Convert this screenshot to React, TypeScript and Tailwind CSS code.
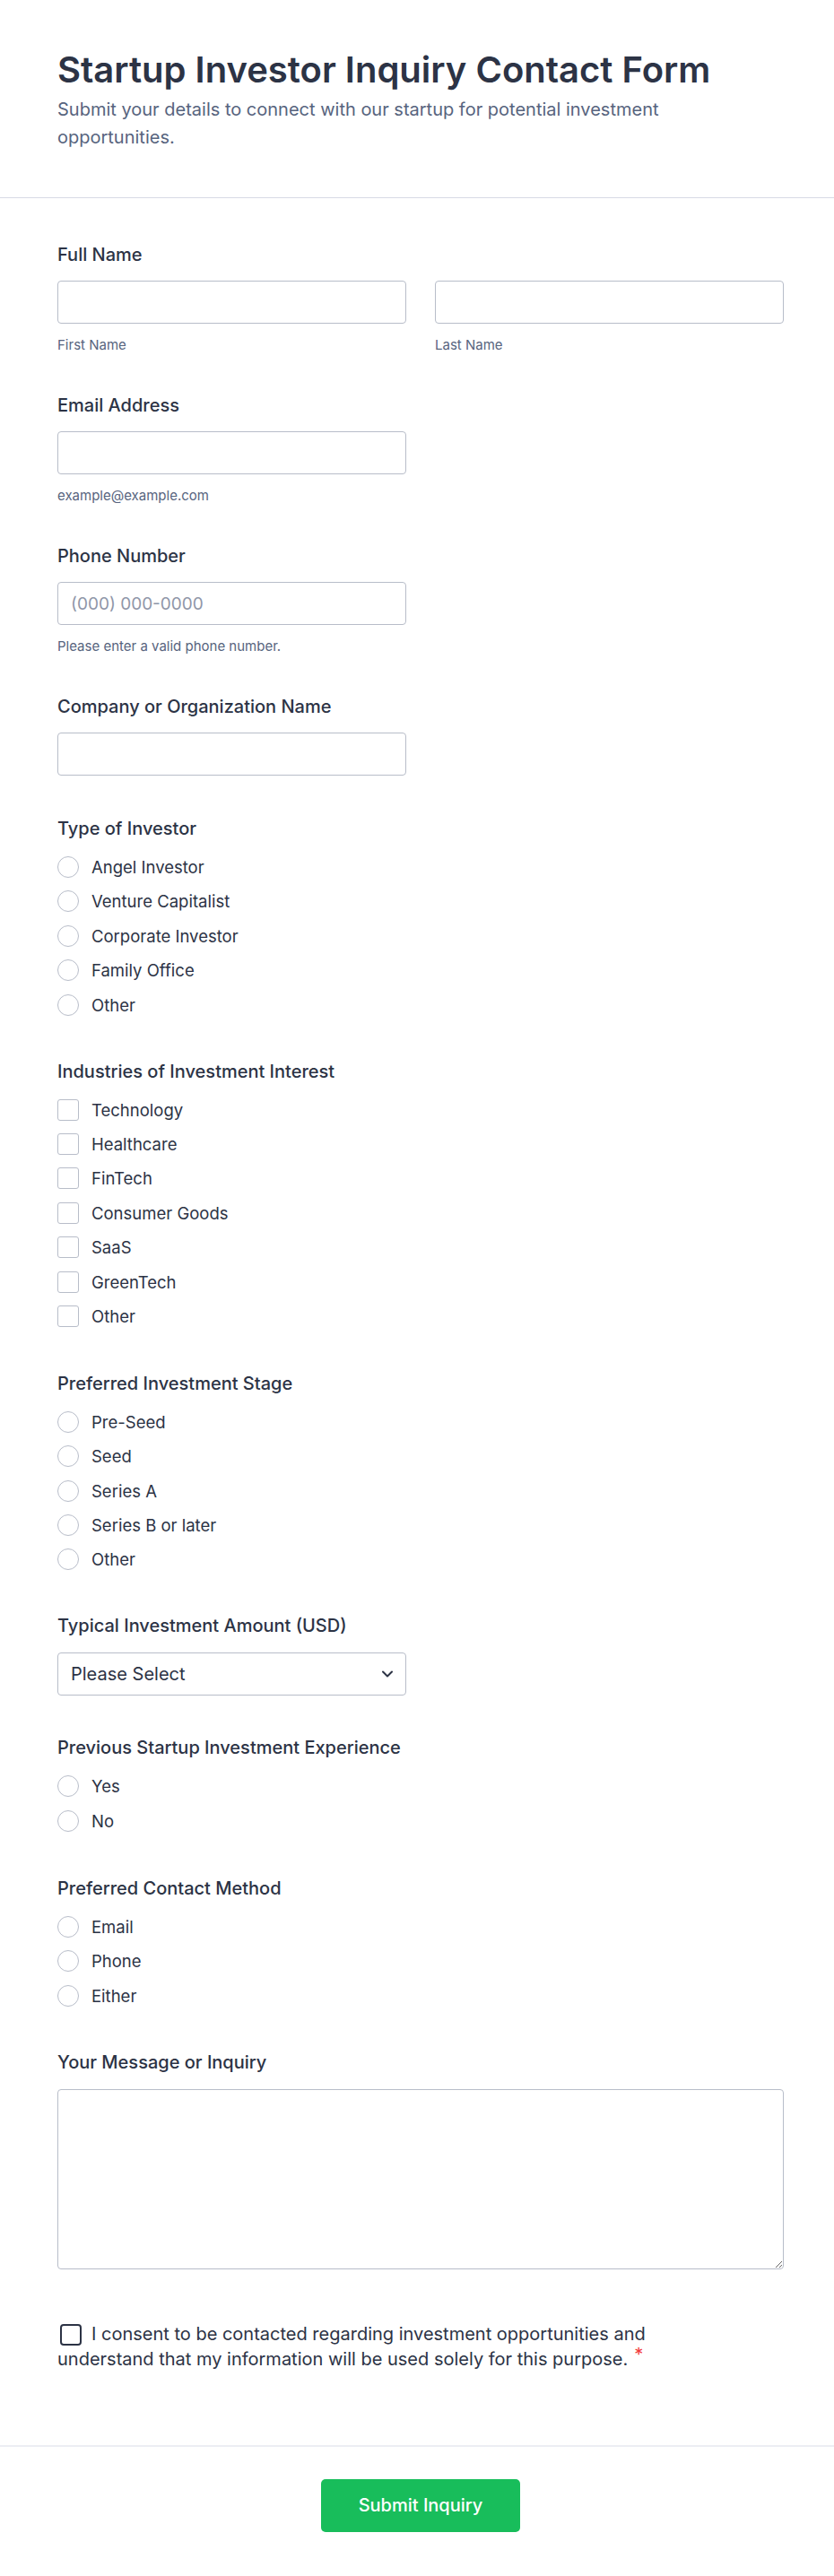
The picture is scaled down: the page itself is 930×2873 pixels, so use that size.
import React from "react";

const labelCls = "block text-[20px] leading-[24px] font-medium text-[#2c3345]";
const inputCls =
  "block w-full h-[48px] border border-[#b8bdc9] rounded-[4px] bg-white px-[14px] text-[19px] text-[#2c3345] placeholder:text-[#8f96a8] outline-none";
const subCls = "mt-[14px] text-[15px] leading-[20px] text-[#57647e]";

function Radio({ label }: { label: string }) {
  return (
    <div className="flex items-center h-6 gap-[14px]">
      <span className="w-6 h-6 shrink-0 rounded-full border-[1.5px] border-[#b8bdc9] bg-white" />
      <span className="text-[18.5px] leading-6 text-[#2c3345]">{label}</span>
    </div>
  );
}

function Check({ label }: { label: string }) {
  return (
    <div className="flex items-center h-6 gap-[14px]">
      <span className="w-6 h-6 shrink-0 rounded-[3px] border-[1.5px] border-[#b8bdc9] bg-white" />
      <span className="text-[18.5px] leading-6 text-[#2c3345]">{label}</span>
    </div>
  );
}

function OptionGroup({
  title,
  items,
  kind,
  className,
}: {
  title: string;
  items: string[];
  kind: "radio" | "check";
  className: string;
}) {
  return (
    <div className={className}>
      <div className={labelCls}>{title}</div>
      <div className="mt-[19px] flex flex-col gap-[14.4px]">
        {items.map((it) =>
          kind === "radio" ? <Radio key={it} label={it} /> : <Check key={it} label={it} />
        )}
      </div>
    </div>
  );
}

export default function App() {
  return (
    <div className="w-[930px] min-h-[2873px] bg-white font-['Inter','Noto_Sans',sans-serif] text-[#2c3345]">
      <header className="pl-16 pr-14 pt-[54px] pb-[51px] border-b border-[#d8dae5]">
        <h1 className="text-[40px] leading-[48px] font-semibold text-[#2c3345]">
          Startup Investor Inquiry Contact Form
        </h1>
        <p className="mt-[5px] max-w-[760px] text-[20px] leading-[31px] text-[#57647e]">
          Submit your details to connect with our startup for potential investment opportunities.
        </p>
      </header>

      <main className="pl-16 pr-14 pt-[51px] pb-[82px] flex flex-col">
        {/* Full Name */}
        <div>
          <div className={labelCls}>Full Name</div>
          <div className="mt-[17px] grid grid-cols-2 gap-x-[32px]">
            <div>
              <input className={inputCls} type="text" />
              <div className={subCls}>First Name</div>
            </div>
            <div>
              <input className={inputCls} type="text" />
              <div className={subCls}>Last Name</div>
            </div>
          </div>
        </div>

        {/* Email */}
        <div className="mt-[45px] w-[389px]">
          <div className={labelCls}>Email Address</div>
          <input className={`mt-[17px] ${inputCls}`} type="text" />
          <div className={subCls}>example@example.com</div>
        </div>

        {/* Phone */}
        <div className="mt-[45px] w-[389px]">
          <div className={labelCls}>Phone Number</div>
          <input className={`mt-[17px] ${inputCls}`} type="text" placeholder="(000) 000-0000" />
          <div className={subCls}>Please enter a valid phone number.</div>
        </div>

        {/* Company */}
        <div className="mt-[45px] w-[389px]">
          <div className={labelCls}>Company or Organization Name</div>
          <input className={`mt-[17px] ${inputCls}`} type="text" />
        </div>

        <OptionGroup
          className="mt-[47px]"
          title="Type of Investor"
          kind="radio"
          items={["Angel Investor", "Venture Capitalist", "Corporate Investor", "Family Office", "Other"]}
        />

        <OptionGroup
          className="mt-[50px]"
          title="Industries of Investment Interest"
          kind="check"
          items={["Technology", "Healthcare", "FinTech", "Consumer Goods", "SaaS", "GreenTech", "Other"]}
        />

        <OptionGroup
          className="mt-[51px]"
          title="Preferred Investment Stage"
          kind="radio"
          items={["Pre-Seed", "Seed", "Series A", "Series B or later", "Other"]}
        />

        {/* Select */}
        <div className="mt-[50px] w-[389px]">
          <div className={labelCls}>Typical Investment Amount (USD)</div>
          <div className="mt-[18px] h-[48px] border border-[#b8bdc9] rounded-[4px] bg-white flex items-center justify-between pl-[14px] pr-[14px]">
            <span className="text-[20px] text-[#2c3345]">Please Select</span>
            <svg width="12" height="8" viewBox="0 0 12 8" fill="none">
              <path d="M1 1.5L6 6.5L11 1.5" stroke="#2c3345" strokeWidth="2" strokeLinecap="round" strokeLinejoin="round" />
            </svg>
          </div>
        </div>

        <OptionGroup
          className="mt-[46px]"
          title="Previous Startup Investment Experience"
          kind="radio"
          items={["Yes", "No"]}
        />

        <OptionGroup
          className="mt-[51px]"
          title="Preferred Contact Method"
          kind="radio"
          items={["Email", "Phone", "Either"]}
        />

        {/* Message */}
        <div className="mt-[50px]">
          <div className={labelCls}>Your Message or Inquiry</div>
          <textarea className="mt-[18px] block w-full h-[201px] border border-[#b8bdc9] rounded-[4px] bg-white outline-none" />
        </div>

        {/* Consent */}
        <p className="mt-[58px] w-[730px] text-[20px] leading-[28px] text-[#2c3345]">
          <span className="inline-block w-6 h-6 border-2 border-[#2c3345] rounded-[4px] align-middle ml-[3px] mr-[11px]" />
          I consent to be contacted regarding investment opportunities and understand that my information will be used solely for this purpose.
          <span className="relative -top-[5px] ml-[7px] inline-block leading-[14px] text-[#f23a3c]">*</span>
        </p>
      </main>

      <footer className="border-t-2 border-[#eceef3] pl-16 pr-14 pt-[36px] pb-[50px] flex justify-center">
        <button className="w-[222px] h-[59px] rounded-[5px] bg-[#18bd5b] text-white text-[20px] font-medium">
          Submit Inquiry
        </button>
      </footer>
    </div>
  );
}
